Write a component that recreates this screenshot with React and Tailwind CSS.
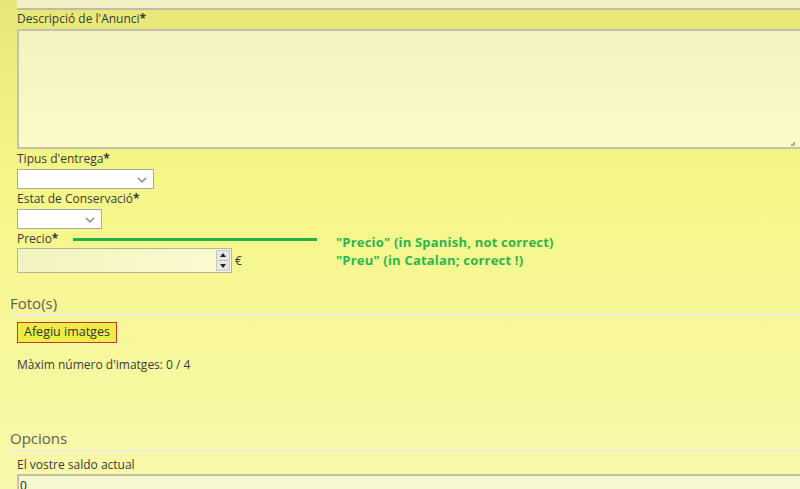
import React from 'react';

const Chevron = () => (
    <svg className="w-[10px] h-[6px]" viewBox="0 0 10 6" fill="none" stroke="#7a7a7a" strokeWidth="1.2">
        <path d="M1 1l4 4 4-4" />
    </svg>
);

const Label = ({ children, star = true }) => (
    <div className="text-[12px] leading-[16px] text-[#3a3a3a]">
        {children}
        {star && <span className="font-bold">*</span>}
    </div>
);

const Select = ({ width }) => (
    <div className={`relative ${width} h-[20px] bg-white border border-[#a8a8a8]`}>
        <div className="absolute right-[6px] top-[7px]">
            <Chevron />
        </div>
    </div>
);

export default function App() {
    return (
        <div
            className="w-[800px] h-[489px] overflow-hidden bg-gradient-to-b from-[#e7e778] via-[#f6f686] via-35% to-[#f9f9ac]"
            style={{ fontFamily: '"Open Sans", "DejaVu Sans", sans-serif' }}
        >
            {/* form fields */}
            <div className="pl-[17px]">
                <div className="h-[10px] w-[800px] bg-[#f1f1c4] border-b-2 border-[#bdbda6]" />
                <div className="mt-[1px]">
                    <Label>Descripció de l'Anunci</Label>
                </div>
                <div className="relative mt-[2px] h-[120px] w-[800px] border-2 border-[#c2c2ae] bg-gradient-to-b from-[#f2f2c2] to-[#fbfbc8]">
                    <div className="absolute right-[20px] bottom-[1px] w-[4px] h-[4px] border-r-2 border-b-2 border-[#b0b0a0] border-dotted" />
                </div>
                <div className="mt-[2px]">
                    <Label>Tipus d'entrega</Label>
                </div>
                <div className="mt-[2px]">
                    <Select width="w-[137px]" />
                </div>
                <div className="mt-[2px]">
                    <Label>Estat de Conservació</Label>
                </div>
                <div className="mt-[2px]">
                    <Select width="w-[85px]" />
                </div>
                <div className="relative mt-[2px] flex items-center">
                    <Label>Precio</Label>
                    <div className="ml-[15px] w-[244px] h-[3px] bg-[#22b04a]" />
                    <div className="absolute left-[319px] top-[2px] text-[13px] leading-[18px] tracking-[0.2px] font-bold text-[#2bb64b]">
                        <div>"Precio" (in Spanish, not correct)</div>
                        <div>"Preu" (in Catalan; correct !)</div>
                    </div>
                </div>
                <div className="flex items-center mt-[1px]">
                    <div className="relative w-[215px] h-[25px] border border-[#b4b4a4] bg-gradient-to-r from-[#f3f3bf] to-[#fbfbcf]">
                        <div className="absolute right-[1px] top-[1px] w-[14px] h-[21px] bg-[#e6e6e6] border border-[#c8c8c8] flex flex-col items-center justify-around">
                            <svg className="w-[6px] h-[4px]" viewBox="0 0 6 4"><path d="M0 4L3 0L6 4Z" fill="#222" /></svg>
                            <div className="w-[10px] h-[1px] bg-[#bbb]" />
                            <svg className="w-[6px] h-[4px]" viewBox="0 0 6 4"><path d="M0 0L3 4L6 0Z" fill="#222" /></svg>
                        </div>
                    </div>
                    <span className="ml-[3px] text-[12px] text-[#3a3a3a]">€</span>
                </div>
            </div>

            {/* Foto(s) */}
            <div className="pl-[10px] mt-[20px]">
                <div className="text-[15px] leading-[20px] text-[#5d5d5d]">Foto(s)</div>
                <div className="h-[2px] bg-[#ecece0] mt-[1px]" />
                <div className="pl-[7px] pt-[6px]">
                    <div className="flex items-center w-fit h-[21px] px-[6px] border border-[#c8323c] bg-[#eded45] text-[12.5px] text-[#333]">
                        Afegiu imatges
                    </div>
                    <div className="mt-[14px] text-[12px] leading-[16px] text-[#3a3a3a]">Màxim número d'imatges: 0 / 4</div>
                </div>
            </div>

            {/* Opcions */}
            <div className="pl-[10px] mt-[55px]">
                <div className="text-[15px] leading-[20px] text-[#5d5d5d]">Opcions</div>
                <div className="h-[2px] bg-[#ecece0] mt-[2px]" />
                <div className="pl-[7px] pt-[5px]">
                    <div className="text-[12px] leading-[16px] text-[#3a3a3a]">El vostre saldo actual</div>
                    <div className="mt-[1px] w-[800px] h-[25px] border-2 border-[#c2c2ae] bg-[#f8f8d0] text-[12px] leading-[20px] text-[#222] pl-[1px]">0</div>
                </div>
            </div>
        </div>
    );
}
